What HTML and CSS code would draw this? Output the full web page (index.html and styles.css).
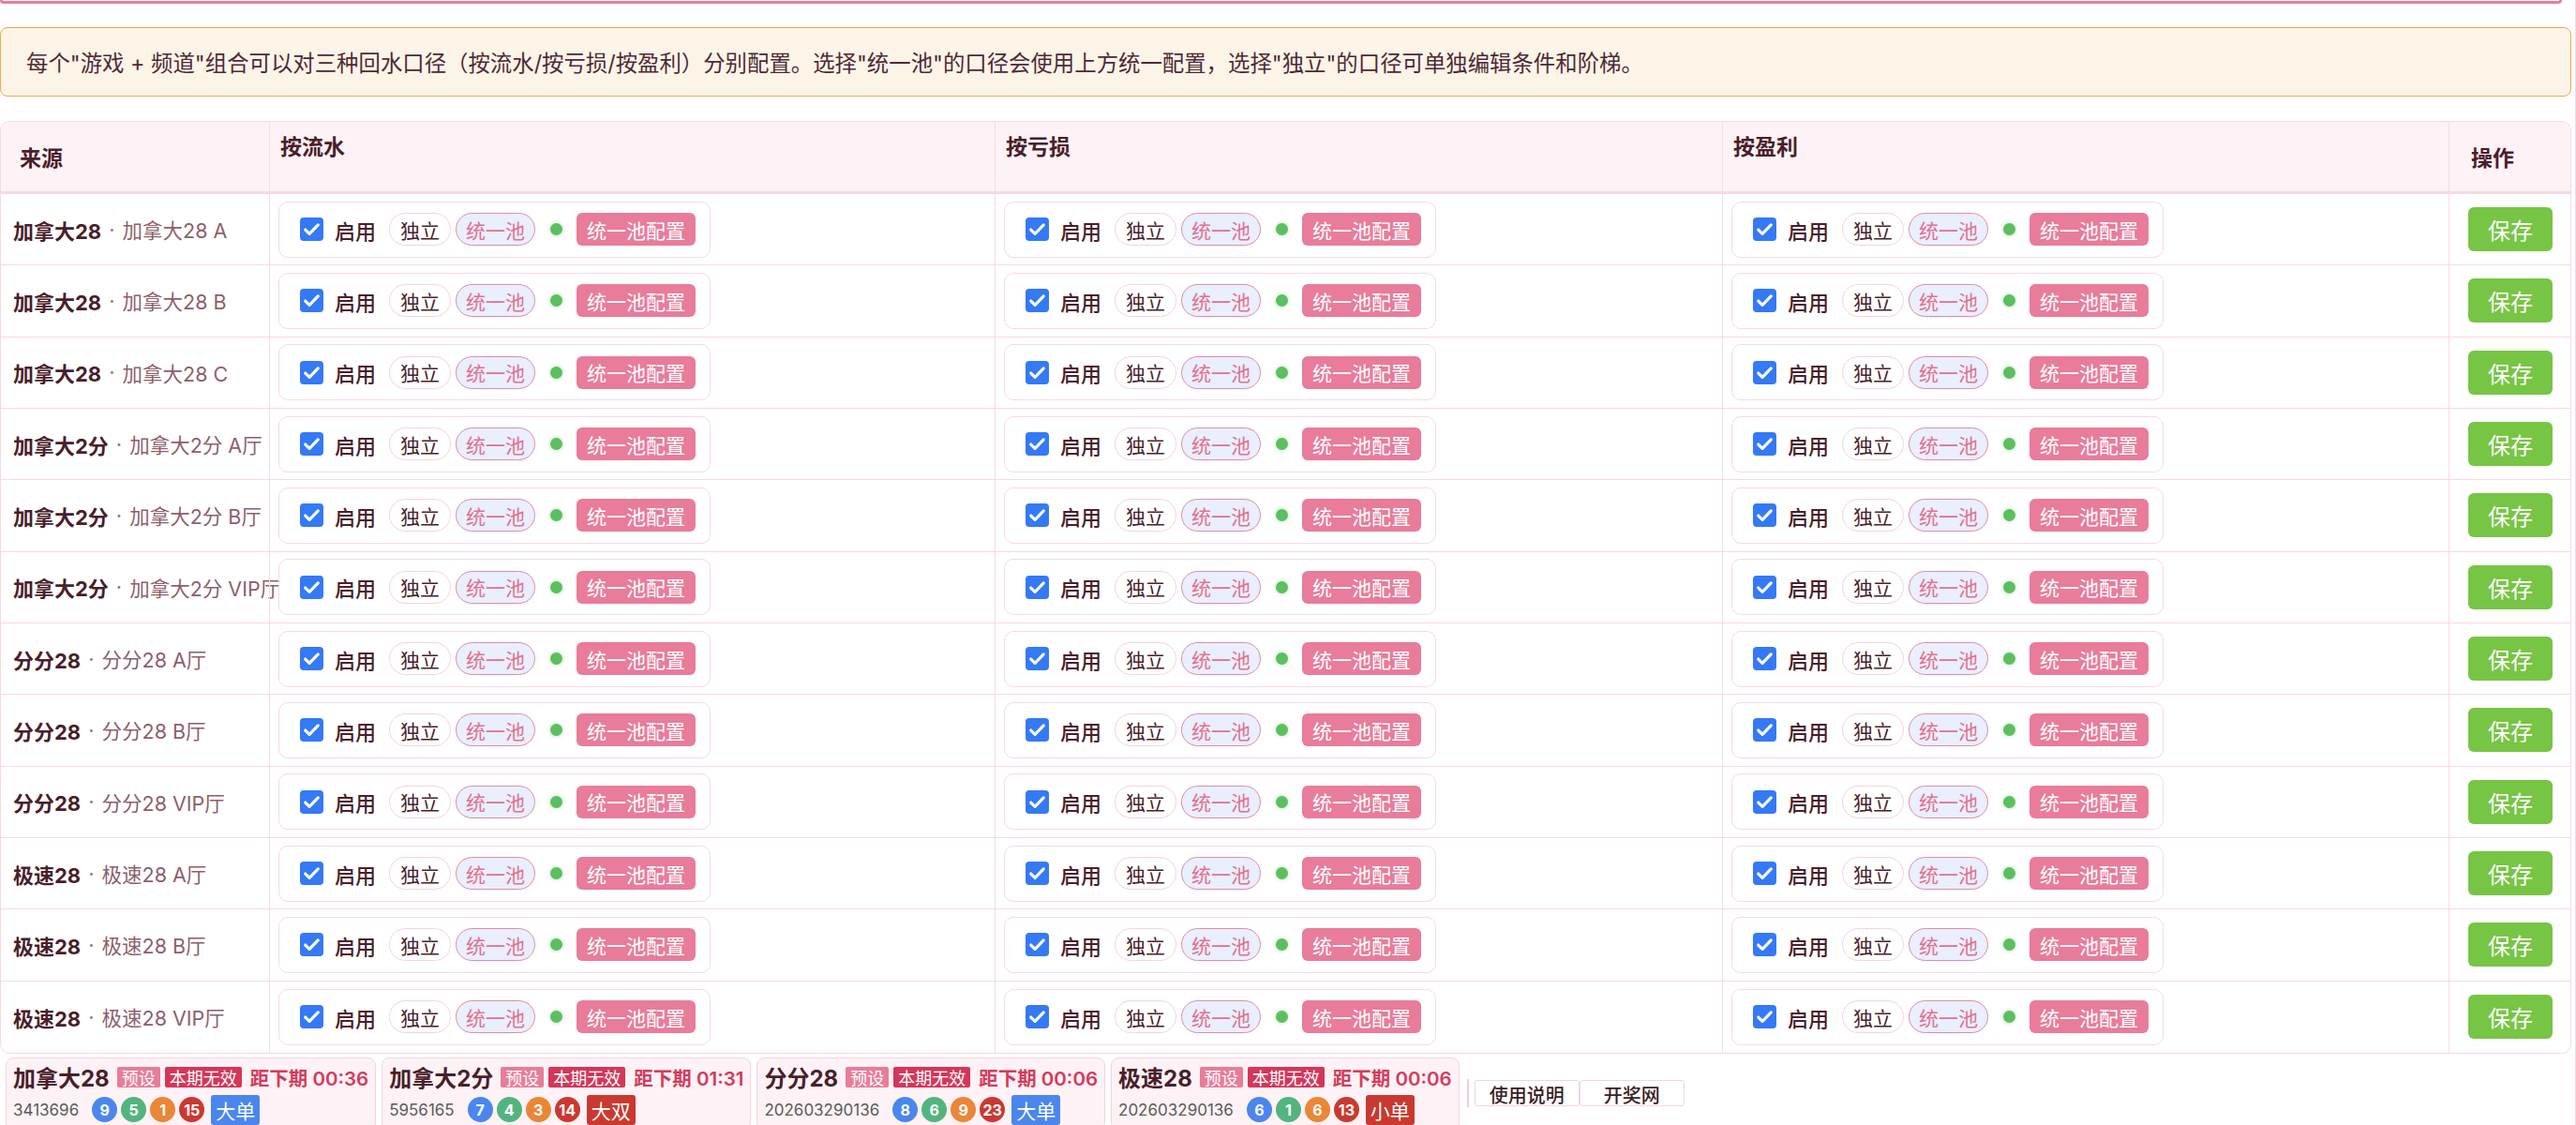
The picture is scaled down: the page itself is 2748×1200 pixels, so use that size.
FILE: index.html
```html
<!DOCTYPE html>
<html lang="zh-CN">
  <head>
    <meta charset="UTF-8" />
    <meta name="viewport" content="width=device-width, initial-scale=1.0" />
    <title>回水口径配置</title>
    <link rel="stylesheet" href="styles.css">
  </head>
  <body>
    <div class="page">
      <div class="topline"></div>

      <div class="notice">每个"游戏 + 频道"组合可以对三种回水口径（按流水/按亏损/按盈利）分别配置。选择"统一池"的口径会使用上方统一配置，选择"独立"的口径可单独编辑条件和阶梯。</div>

      <div class="grid">
        <div class="grid-head">
          <div class="th th-src">来源</div>
          <div class="th th-mode">按流水</div>
          <div class="th th-mode">按亏损</div>
          <div class="th th-mode">按盈利</div>
          <div class="th th-op">操作</div>
        </div>
        <div id="rows"></div>
      </div>

      <div class="drawbar">
        <div class="draw">
          <div class="draw-top">
            <span class="game">加拿大28</span>
            <span class="tag tag-preset">预设</span>
            <span class="tag tag-void">本期无效</span>
            <span class="count">距下期 00:36</span>
          </div>
          <div class="draw-bottom">
            <span class="issue">3413696</span>
            <span class="ball blue">9</span>
            <span class="ball green">5</span>
            <span class="ball orange">1</span>
            <span class="ball red">15</span>
            <span class="result blue">大单</span>
          </div>
        </div>
        <div class="draw">
          <div class="draw-top">
            <span class="game">加拿大2分</span>
            <span class="tag tag-preset">预设</span>
            <span class="tag tag-void">本期无效</span>
            <span class="count">距下期 01:31</span>
          </div>
          <div class="draw-bottom">
            <span class="issue">5956165</span>
            <span class="ball blue">7</span>
            <span class="ball green">4</span>
            <span class="ball orange">3</span>
            <span class="ball red">14</span>
            <span class="result red">大双</span>
          </div>
        </div>
        <div class="draw">
          <div class="draw-top">
            <span class="game">分分28</span>
            <span class="tag tag-preset">预设</span>
            <span class="tag tag-void">本期无效</span>
            <span class="count">距下期 00:06</span>
          </div>
          <div class="draw-bottom">
            <span class="issue">202603290136</span>
            <span class="ball blue">8</span>
            <span class="ball green">6</span>
            <span class="ball orange">9</span>
            <span class="ball red">23</span>
            <span class="result blue">大单</span>
          </div>
        </div>
        <div class="draw">
          <div class="draw-top">
            <span class="game">极速28</span>
            <span class="tag tag-preset">预设</span>
            <span class="tag tag-void">本期无效</span>
            <span class="count">距下期 00:06</span>
          </div>
          <div class="draw-bottom">
            <span class="issue">202603290136</span>
            <span class="ball blue">6</span>
            <span class="ball green">1</span>
            <span class="ball orange">6</span>
            <span class="ball red">13</span>
            <span class="result red">小单</span>
          </div>
        </div>
        <div class="bar-sep"></div>
        <div class="links">
          <button class="link-btn">使用说明</button>
          <button class="link-btn">开奖网</button>
        </div>
      </div>
    </div>

    <script>
      const sources = [
        ["加拿大28", "加拿大28 A"],
        ["加拿大28", "加拿大28 B"],
        ["加拿大28", "加拿大28 C"],
        ["加拿大2分", "加拿大2分 A厅"],
        ["加拿大2分", "加拿大2分 B厅"],
        ["加拿大2分", "加拿大2分 VIP厅"],
        ["分分28", "分分28 A厅"],
        ["分分28", "分分28 B厅"],
        ["分分28", "分分28 VIP厅"],
        ["极速28", "极速28 A厅"],
        ["极速28", "极速28 B厅"],
        ["极速28", "极速28 VIP厅"],
      ];

      const modeCell = `
        <div class="td td-mode">
          <div class="mode-card">
            <span class="chk"><svg viewBox="0 0 24 24"><path d="M5.5 12.5l4.2 4.2L18.5 7.5" /></svg></span>
            <span class="on">启用</span>
            <span class="pill">独立</span>
            <span class="pill pill-pool">统一池</span>
            <span class="dot"></span>
            <span class="pool-btn">统一池配置</span>
          </div>
        </div>`;

      document.getElementById("rows").innerHTML = sources
        .map(
          ([game, channel]) => `
        <div class="row">
          <div class="td td-src"><b>${game}</b><span class="sep">·</span><span class="sub">${channel}</span></div>
          ${modeCell}${modeCell}${modeCell}
          <div class="td td-op"><button class="save">保存</button></div>
        </div>`
        )
        .join("");
    </script>
  </body>
</html>
```

FILE: styles.css
```css
body {
  margin: 0;
  padding: 0;
  background-color: #ffffff;
  font-family: "Inter", "Noto Sans CJK SC", sans-serif;
  color: #4a1e2b;
}
.page {
  padding-right: 4px;
  border-right: 1px solid #f3dbe1;
  min-height: 1200px;
  box-sizing: border-box;
}
.topline {
  height: 1px;
  margin-right: 10px;
  border: 3px solid #e87c9a;
  border-top: 0;
  border-radius: 0 0 8px 8px;
}
.notice {
  margin-top: 25px;
  height: 74px;
  box-sizing: border-box;
  display: flex;
  align-items: center;
  padding: 0 27px;
  background-color: #fdf4e8;
  border: 1px solid #eaa94f;
  border-radius: 8px;
  font-size: 23.4px;
  color: #4d2a33;
}

/* table */
.grid {
  margin-top: 26px;
  border: 1px solid #f6d9e0;
  border-radius: 10px;
  overflow: hidden;
}
.grid-head,
.row {
  display: grid;
  grid-template-columns: 286px 774px 776px 775px 1fr;
}
.grid-head {
  height: 77px;
  box-sizing: border-box;
  background-color: #fdf2f5;
  border-bottom: 3px solid #f7d9e0;
}
.th {
  font-size: 23px;
  font-weight: 700;
  display: flex;
}
.th + .th,
.td + .td {
  border-left: 1px solid #f6dde3;
}
.th-src {
  align-items: center;
  padding-left: 20px;
}
.th-mode {
  align-items: flex-start;
  padding: 8px 0 0 11px;
}
.th-op {
  align-items: center;
  padding-left: 23px;
}
.row {
  height: 76.33px;
  box-sizing: border-box;
  border-bottom: 1px solid #f6d9e0;
}
.row:last-child {
  border-bottom: 0;
}
.td {
  display: flex;
  align-items: center;
}
.td-src {
  padding-left: 13px;
  font-size: 22px;
  white-space: nowrap;
}
.td-src b {
  font-weight: 700;
}
.sep {
  color: #9a7380;
  margin: 0 8px;
}
.sub {
  color: #8d5f6c;
  font-size: 21.5px;
}
.td-mode {
  padding-left: 9px;
}
.mode-card {
  display: flex;
  align-items: center;
  height: 60px;
  box-sizing: border-box;
  padding: 0 15px 0 22px;
  border: 1px solid #f8d9e2;
  border-radius: 10px;
}
.chk {
  width: 25px;
  height: 25px;
  border-radius: 4px;
  background-color: #3479f6;
  display: flex;
  margin-right: 12px;
}
.chk svg {
  width: 25px;
  height: 25px;
  fill: none;
  stroke: #ffffff;
  stroke-width: 3;
  stroke-linecap: round;
  stroke-linejoin: round;
}
.on {
  font-size: 22px;
  font-weight: 500;
  margin-right: 14px;
}
.pill {
  height: 35px;
  box-sizing: border-box;
  display: flex;
  align-items: center;
  padding: 0 11px;
  border: 1px solid #f6d3dc;
  border-radius: 18px;
  background-color: #ffffff;
  font-size: 21px;
}
.pill-pool {
  margin-left: 5px;
  padding: 0 10px;
  background-color: #e9effc;
  border: 1.5px solid #e48aa5;
  color: #e46f90;
}
.dot {
  width: 13px;
  height: 13px;
  border-radius: 50%;
  background-color: #5cbf5f;
  box-shadow: 0 0 5px rgba(92, 191, 95, 0.45);
  margin: 0 15px 0 16px;
}
.pool-btn {
  height: 35px;
  display: flex;
  align-items: center;
  padding: 0 11px;
  border-radius: 6px;
  background-color: #e87c9a;
  color: #ffffff;
  font-size: 21px;
}
.td-op {
  padding-left: 20px;
}
.save {
  width: 90px;
  height: 47px;
  border: none;
  border-radius: 6px;
  background-color: #77c544;
  color: #ffffff;
  font-family: inherit;
  font-size: 24px;
  padding: 0;
}

/* draw bar */
.drawbar {
  display: flex;
  align-items: center;
  margin-top: 4px;
  padding-left: 6px;
}
.draw {
  padding: 5px 7px 4px 7px;
  margin-right: 6px;
  background-color: #fdf2f5;
  border: 1px solid #f5d3dc;
  border-radius: 8px;
}
.draw-top,
.draw-bottom {
  display: flex;
  align-items: center;
  white-space: nowrap;
}
.draw-top {
  height: 30px;
}
.draw-bottom {
  height: 32px;
  margin-top: 4px;
}
.game {
  font-size: 24px;
  font-weight: 700;
  margin-right: 8px;
}
.tag {
  height: 22px;
  display: flex;
  align-items: center;
  padding: 0 5px;
  border-radius: 2px;
  color: #ffffff;
  font-size: 18px;
}
.tag-preset {
  background-color: #e87c9a;
}
.tag-void {
  background-color: #d4365a;
  margin-left: 5px;
}
.count {
  margin-left: 9px;
  font-size: 20.5px;
  font-weight: 600;
  color: #d63a5c;
}
.issue {
  font-size: 17px;
  color: #5b5b5b;
  margin-right: 14px;
}
.ball {
  width: 27px;
  height: 27px;
  border-radius: 50%;
  display: flex;
  align-items: center;
  justify-content: center;
  margin-right: 4px;
  color: #ffffff;
  font-size: 16px;
  font-weight: 700;
}
.result {
  height: 32px;
  display: flex;
  align-items: center;
  padding: 0 5px;
  margin-left: 3px;
  border-radius: 3px;
  color: #ffffff;
  font-size: 21px;
}
.blue {
  background-color: #4a86ee;
}
.green {
  background-color: #52b47e;
}
.orange {
  background-color: #ea8636;
}
.red {
  background-color: #c9392f;
}
.bar-sep {
  width: 2px;
  height: 30px;
  background-color: #f3ccd6;
  margin: 0 6px 0 2px;
}
.links {
  display: flex;
}
.link-btn {
  min-width: 112px;
  height: 28px;
  padding: 0 10px;
  border: 1px solid #f0d6dc;
  border-radius: 3px;
  background-color: #ffffff;
  color: #3a1d25;
  font-family: inherit;
  font-size: 20px;
  font-weight: 500;
}
```
